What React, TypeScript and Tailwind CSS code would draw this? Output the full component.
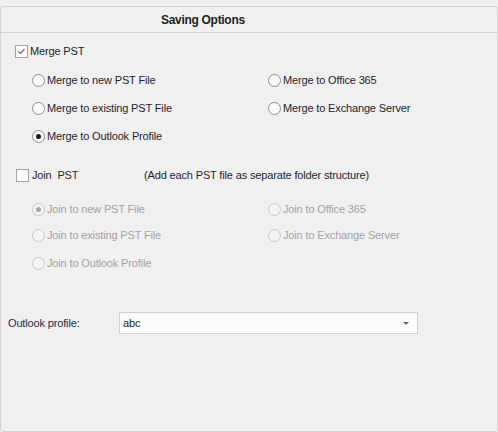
import React from "react";

function CheckBox({ checked }: { checked?: boolean }) {
  return (
    <span className="w-[13px] h-[13px] border border-[#a2a2a2] bg-white flex items-center justify-center shrink-0">
      {checked && (
        <svg width="9" height="9" viewBox="0 0 9 9">
          <path d="M1.5 4.5 L3.5 6.5 L7.5 2" fill="none" stroke="#6a6a6a" strokeWidth="1.2" />
        </svg>
      )}
    </span>
  );
}

function Radio({ checked, disabled }: { checked?: boolean; disabled?: boolean }) {
  return (
    <span
      className={`w-[13px] h-[13px] rounded-full border flex items-center justify-center shrink-0 ${
        disabled ? "border-[#c8c8c8] bg-[#f4f4f4]" : "border-[#8c8c8c] bg-white"
      }`}
    >
      {checked && (
        <span className={`w-[5px] h-[5px] rounded-full ${disabled ? "bg-[#a8a8a8]" : "bg-[#1a1a1a]"}`} />
      )}
    </span>
  );
}

function Option({
  label,
  checked,
  disabled,
}: {
  label: string;
  checked?: boolean;
  disabled?: boolean;
}) {
  return (
    <div className="flex items-center gap-[2px]">
      <Radio checked={checked} disabled={disabled} />
      <span className={disabled ? "text-[#a3a3a3]" : "text-[#1e1e30]"}>{label}</span>
    </div>
  );
}

export default function App() {
  return (
    <div
      className="w-[498px] h-[432px] bg-[#f0f0f0] pt-[6px] text-[11px] tracking-[-0.15px] leading-none"
      style={{ fontFamily: '"Liberation Sans", Arial, sans-serif' }}
    >
      <div className="h-[426px] border border-[#d3d3d3] rounded-[3px] flex flex-col">
        <div className="h-[26px] border-b border-[#d3d3d3] flex items-center pl-[160px] font-bold text-[12px] tracking-[-0.3px] text-[#222]">
          Saving Options
        </div>

        <div className="pl-[14px] mt-[11px] h-[14px] flex items-center gap-[2px]">
          <CheckBox checked />
          <span className="text-[#1e1e30]">Merge PST</span>
        </div>

        <div className="mt-[8px] pl-[31px] grid grid-cols-[236px_1fr] auto-rows-[28px] items-center">
          <Option label="Merge to new PST File" />
          <Option label="Merge to Office 365" />
          <Option label="Merge to existing PST File" />
          <Option label="Merge to Exchange Server" />
          <Option label="Merge to Outlook Profile" checked />
        </div>

        <div className="pl-[15px] mt-[18px] h-[14px] flex items-center text-[#1e1e30]">
          <CheckBox />
          <span className="ml-[3px] w-[112px] whitespace-pre">Join  PST</span>
          <span>(Add each PST file as separate folder structure)</span>
        </div>

        <div className="mt-[14px] pl-[31px] grid grid-cols-[236px_1fr] auto-rows-[26px] items-center">
          <Option label="Join to new PST File" checked disabled />
          <Option label="Join to Office 365" disabled />
          <Option label="Join to existing PST File" disabled />
          <Option label="Join to Exchange Server" disabled />
          <div className="pt-[4px]">
            <Option label="Join to Outlook Profile" disabled />
          </div>
        </div>

        <div className="mt-[38px] pl-[7px] flex items-center">
          <span className="w-[111px] text-[#2a2a48]">Outlook profile:</span>
          <div className="w-[299px] h-[22px] bg-[#fcfcfc] border border-[#d0d0d0] flex items-center pl-[3px] pr-[8px]">
            <span className="flex-1 text-[#1e1e1e]">abc</span>
            <svg width="6" height="3" viewBox="0 0 6 3">
              <path d="M0 0 H6 L3 3 Z" fill="#6b6b6b" />
            </svg>
          </div>
        </div>
      </div>
    </div>
  );
}
